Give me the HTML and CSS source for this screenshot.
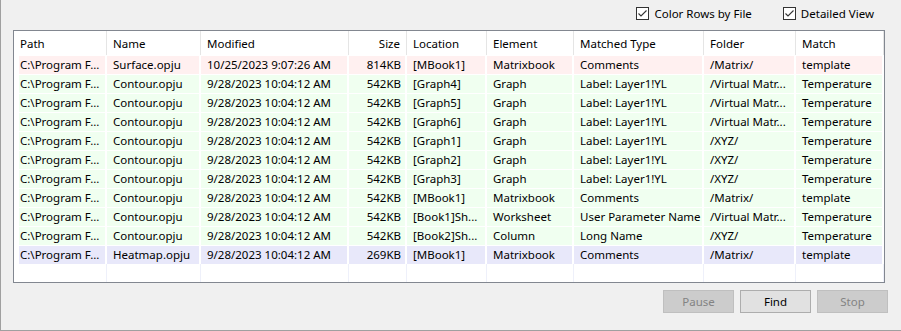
FILE: index.html
```html
<!DOCTYPE html>
<html lang="en">
<head>
    <meta charset="UTF-8">
    <title>Find in Files</title>
    <link rel="stylesheet" href="styles.css">
</head>
<body>
    <div class="window">
        <div class="options">
            <label class="check">
                <svg class="box" width="13" height="13" viewBox="0 0 13 13"><rect x="0.5" y="0.5" width="12" height="12" fill="#fff" stroke="#333"/><polyline points="2.5,6.5 5,9 10.5,3.5" fill="none" stroke="#333" stroke-width="1.1"/></svg>
                <span>Color Rows by File</span>
            </label>
            <label class="check">
                <svg class="box" width="13" height="13" viewBox="0 0 13 13"><rect x="0.5" y="0.5" width="12" height="12" fill="#fff" stroke="#333"/><polyline points="2.5,6.5 5,9 10.5,3.5" fill="none" stroke="#333" stroke-width="1.1"/></svg>
                <span>Detailed View</span>
            </label>
        </div>

        <div class="list">
            <div class="row head">
                <div class="cell first">Path</div>
                <div class="cell">Name</div>
                <div class="cell">Modified</div>
                <div class="cell num">Size</div>
                <div class="cell">Location</div>
                <div class="cell">Element</div>
                <div class="cell">Matched Type</div>
                <div class="cell">Folder</div>
                <div class="cell">Match</div>
            </div>

            <div class="row pink">
                <div class="cell first">C:\Program F...</div>
                <div class="cell">Surface.opju</div>
                <div class="cell">10/25/2023 9:07:26 AM</div>
                <div class="cell num">814KB</div>
                <div class="cell">[MBook1]</div>
                <div class="cell">Matrixbook</div>
                <div class="cell">Comments</div>
                <div class="cell">/Matrix/</div>
                <div class="cell">template</div>
            </div>
            <div class="row green">
                <div class="cell first">C:\Program F...</div>
                <div class="cell">Contour.opju</div>
                <div class="cell">9/28/2023 10:04:12 AM</div>
                <div class="cell num">542KB</div>
                <div class="cell">[Graph4]</div>
                <div class="cell">Graph</div>
                <div class="cell">Label: Layer1!YL</div>
                <div class="cell">/Virtual Matr...</div>
                <div class="cell">Temperature</div>
            </div>
            <div class="row green">
                <div class="cell first">C:\Program F...</div>
                <div class="cell">Contour.opju</div>
                <div class="cell">9/28/2023 10:04:12 AM</div>
                <div class="cell num">542KB</div>
                <div class="cell">[Graph5]</div>
                <div class="cell">Graph</div>
                <div class="cell">Label: Layer1!YL</div>
                <div class="cell">/Virtual Matr...</div>
                <div class="cell">Temperature</div>
            </div>
            <div class="row green">
                <div class="cell first">C:\Program F...</div>
                <div class="cell">Contour.opju</div>
                <div class="cell">9/28/2023 10:04:12 AM</div>
                <div class="cell num">542KB</div>
                <div class="cell">[Graph6]</div>
                <div class="cell">Graph</div>
                <div class="cell">Label: Layer1!YL</div>
                <div class="cell">/Virtual Matr...</div>
                <div class="cell">Temperature</div>
            </div>
            <div class="row green">
                <div class="cell first">C:\Program F...</div>
                <div class="cell">Contour.opju</div>
                <div class="cell">9/28/2023 10:04:12 AM</div>
                <div class="cell num">542KB</div>
                <div class="cell">[Graph1]</div>
                <div class="cell">Graph</div>
                <div class="cell">Label: Layer1!YL</div>
                <div class="cell">/XYZ/</div>
                <div class="cell">Temperature</div>
            </div>
            <div class="row green">
                <div class="cell first">C:\Program F...</div>
                <div class="cell">Contour.opju</div>
                <div class="cell">9/28/2023 10:04:12 AM</div>
                <div class="cell num">542KB</div>
                <div class="cell">[Graph2]</div>
                <div class="cell">Graph</div>
                <div class="cell">Label: Layer1!YL</div>
                <div class="cell">/XYZ/</div>
                <div class="cell">Temperature</div>
            </div>
            <div class="row green">
                <div class="cell first">C:\Program F...</div>
                <div class="cell">Contour.opju</div>
                <div class="cell">9/28/2023 10:04:12 AM</div>
                <div class="cell num">542KB</div>
                <div class="cell">[Graph3]</div>
                <div class="cell">Graph</div>
                <div class="cell">Label: Layer1!YL</div>
                <div class="cell">/XYZ/</div>
                <div class="cell">Temperature</div>
            </div>
            <div class="row green">
                <div class="cell first">C:\Program F...</div>
                <div class="cell">Contour.opju</div>
                <div class="cell">9/28/2023 10:04:12 AM</div>
                <div class="cell num">542KB</div>
                <div class="cell">[MBook1]</div>
                <div class="cell">Matrixbook</div>
                <div class="cell">Comments</div>
                <div class="cell">/Matrix/</div>
                <div class="cell">template</div>
            </div>
            <div class="row green">
                <div class="cell first">C:\Program F...</div>
                <div class="cell">Contour.opju</div>
                <div class="cell">9/28/2023 10:04:12 AM</div>
                <div class="cell num">542KB</div>
                <div class="cell">[Book1]Sh...</div>
                <div class="cell">Worksheet</div>
                <div class="cell">User Parameter Name</div>
                <div class="cell">/Virtual Matr...</div>
                <div class="cell">Temperature</div>
            </div>
            <div class="row green">
                <div class="cell first">C:\Program F...</div>
                <div class="cell">Contour.opju</div>
                <div class="cell">9/28/2023 10:04:12 AM</div>
                <div class="cell num">542KB</div>
                <div class="cell">[Book2]Sh...</div>
                <div class="cell">Column</div>
                <div class="cell">Long Name</div>
                <div class="cell">/XYZ/</div>
                <div class="cell">Temperature</div>
            </div>
            <div class="row blue">
                <div class="cell first">C:\Program F...</div>
                <div class="cell">Heatmap.opju</div>
                <div class="cell">9/28/2023 10:04:12 AM</div>
                <div class="cell num">269KB</div>
                <div class="cell">[MBook1]</div>
                <div class="cell">Matrixbook</div>
                <div class="cell">Comments</div>
                <div class="cell">/Matrix/</div>
                <div class="cell">template</div>
            </div>

            <!-- empty space under the rows keeps the faint column lines -->
            <div class="row filler">
                <div class="cell first"></div>
                <div class="cell"></div>
                <div class="cell"></div>
                <div class="cell"></div>
                <div class="cell"></div>
                <div class="cell"></div>
                <div class="cell"></div>
                <div class="cell"></div>
                <div class="cell"></div>
            </div>
        </div>

        <div class="buttons">
            <button class="btn" disabled>Pause</button>
            <button class="btn">Find</button>
            <button class="btn" disabled>Stop</button>
        </div>
    </div>
</body>
</html>
```

FILE: styles.css
```css
html, body {
    margin: 0;
    padding: 0;
    background-color: #f0f0f0;
}
.window {
    width: 901px;
    height: 331px;
    box-sizing: border-box;
    border-left: 1px solid #a0a0a0;
    border-bottom: 1px solid #a0a0a0;
    background-color: #f0f0f0;
    font-family: "Noto Sans", "Segoe UI", sans-serif;
    font-size: 11.5px;
    color: #000;
    display: flex;
    flex-direction: column;
}
.options {
    display: flex;
    justify-content: flex-end;
    gap: 31px;
    height: 13px;
    margin-top: 7px;
    padding-right: 27px;
}
.check {
    display: flex;
    align-items: center;
    gap: 5px;
    line-height: 13px;
    white-space: nowrap;
}
.box {
    display: block;
    flex: none;
}
.list {
    margin: 10px 0 0 12px;
    width: 872px;
    height: 253px;
    box-sizing: border-box;
    border: 1px solid #828790;
    background-color: #fff;
    display: flex;
    flex-direction: column;
    overflow: hidden;
}
.row {
    display: grid;
    grid-template-columns: 93px 94px 148px 58px 80px 87px 130px 92px 88px;
    height: 19px;
    padding-top: 1px;
    box-sizing: border-box;
}
.cell {
    padding-left: 6px;
    margin-right: 2px;
    line-height: 18px;
    white-space: nowrap;
    overflow: hidden;
}
.cell.first {
    margin-left: 5px;
    padding-left: 1px;
}
.cell.num {
    text-align: right;
    padding-left: 0;
    padding-right: 4px;
}
.head {
    height: 24px;
    padding-top: 0;
}
.head .cell {
    line-height: 25px;
    margin-right: 0;
    border-right: 1px solid #e5e5e5;
}
.head .cell.first {
    margin-left: 0;
    padding-left: 6px;
}
.head .cell.num {
    padding-right: 6px;
}
.pink .cell { background-color: #fff0f0; }
.green .cell { background-color: #f0fff0; }
.blue .cell { background-color: #e8e8fa; }
.filler {
    flex: 1;
    padding-top: 0;
}
.filler .cell {
    margin-right: 0;
    border-right: 1px solid #eef0fa;
}
.filler .cell.first {
    margin-left: 0;
}
.buttons {
    display: flex;
    justify-content: flex-end;
    gap: 6px;
    margin-top: 7px;
    padding-right: 13px;
}
.btn {
    width: 71px;
    height: 23px;
    box-sizing: border-box;
    padding: 0;
    font-family: inherit;
    font-size: 11.5px;
    color: #000;
    background-color: #e1e1e1;
    border: 1px solid #adadad;
    border-radius: 0;
}
.btn:disabled {
    color: #838383;
    background-color: #cccccc;
    border-color: #bfbfbf;
}
```
